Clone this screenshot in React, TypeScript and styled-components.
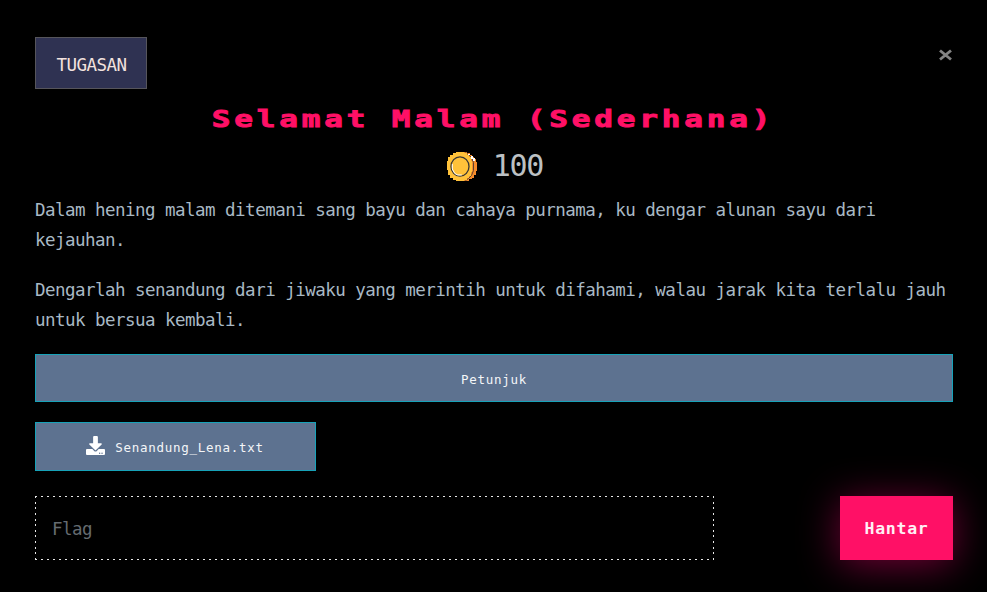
import React from "react";
import styled, { createGlobalStyle } from "styled-components";

const mono = `"DejaVu Sans Mono", "Liberation Mono", monospace`;

const Global = createGlobalStyle`
  *, *::before, *::after { box-sizing: border-box; }
  html, body { margin: 0; background: #000; }
  body {
    overflow: hidden;
    font-family: ${mono};
    color: #a9b9c5;
  }
`;

const Modal = styled.main`
  width: 987px;
  height: 592px;
  padding: 37px 34px 0 35px;
  background: #000;
  overflow: hidden;
`;

const Header = styled.header`
  display: flex;
  justify-content: space-between;
  align-items: flex-start;
`;

const Tab = styled.button`
  width: 112px;
  height: 52px;
  padding: 3px 0 0 1px;
  border: 1px solid #56555b;
  background: #2f3252;
  color: #f3e2df;
  font: 17.5px/22px ${mono};
  letter-spacing: -0.53px;
`;

const Close = styled.button`
  display: flex;
  margin-top: 12px;
  padding: 0;
  border: 0;
  background: none;
  color: #838383;
`;

const Title = styled.h3`
  margin: 14px 2px 0 0;
  height: 32px;
  display: flex;
  justify-content: center;
  color: #ff1066;
  font: bold 23px/32px ${mono};
  letter-spacing: 2.82px;
  white-space: nowrap;
  transform: scaleX(1.35);
  -webkit-text-stroke: 0.9px #ff1066;
`;

const Score = styled.div`
  display: flex;
  align-items: center;
  justify-content: center;
  gap: 15px;
  height: 40px;
  margin-top: 11px;
  padding-left: 2px;
  color: #bcc0c3;
  font: 30px/40px ${mono};
  letter-spacing: -1.3px;
`;

const Description = styled.div`
  margin-top: 8px;
  font-size: 17.5px;
  line-height: 30px;
  letter-spacing: -0.53px;
`;

const Paragraph = styled.p`
  margin: 0;
  padding: 1px 0 19px;
`;

const InfoButton = styled.button<{ $width: string; $height: number }>`
  display: flex;
  align-items: center;
  justify-content: center;
  gap: 10px;
  width: ${(p) => p.$width};
  height: ${(p) => p.$height}px;
  padding: 3px 0 0;
  border: 1px solid #17a2b8;
  background: #5d7290;
  color: #f4f6f8;
  font: 12.5px/20px ${mono};
  letter-spacing: 0.72px;
`;

const Files = styled.div`
  margin-top: 20px;
`;

const Form = styled.form`
  display: flex;
  justify-content: space-between;
  margin-top: 25px;
`;

const FlagInput = styled.input`
  width: 679px;
  height: 64px;
  padding: 2px 17px 0;
  border: 0;
  border-radius: 0;
  outline: none;
  background:
    repeating-linear-gradient(90deg, #e8e8e8 0 2px, transparent 2px 6px) top / 100% 1px no-repeat,
    repeating-linear-gradient(90deg, #e8e8e8 0 2px, transparent 2px 6px) bottom / 100% 1px no-repeat,
    repeating-linear-gradient(180deg, #e8e8e8 0 2px, transparent 2px 5.64px) left / 1px 100% no-repeat,
    repeating-linear-gradient(180deg, #e8e8e8 0 2px, transparent 2px 5.64px) right / 1px 100% no-repeat,
    #000;
  color: #fff;
  font: 17.5px/30px ${mono};
  letter-spacing: -0.53px;
  &::placeholder { color: #656b70; opacity: 1; }
`;

const Submit = styled.button`
  width: 113px;
  height: 64px;
  padding: 2px 0 0;
  border: 0;
  background: #ff1066;
  color: #fff0f5;
  font: bold 16.5px/24px ${mono};
  letter-spacing: 0.7px;
  box-shadow: 0 5px 40px rgba(255, 0, 120, 0.45);
`;

const Coin = () => (
  <svg width="31" height="29" viewBox="0 0 31 29">
    <path d="M10 0h10v1h3v2h2v2h2v2h2v3h1v9h-1v4h-2v3h-2v1h-3v2H10z" fill="#f58b2c" />
    <path d="M18.500 0.500l3 2 3 3 2 5v8l-2 5-3 3-3 2" fill="none" stroke="#5a4330" />
    <path d="M9 0h8v1h3v2h2v2h2v4h1v11h-1v4h-2v2h-2v2h-3v1H9v-1H6v-2H3v-3H1v-5H0V9h1V5h2V3h3V1h3z" fill="#ffc23a" />
    <path d="M24 4h2v2h2v3h-2V7h-2zM21 2h2v1h-2z" fill="#fff" />
    <ellipse cx="13" cy="14.500" rx="9" ry="9.700" fill="#ffc23a" stroke="#383634" strokeWidth="1.300" />
    <path d="M5.300 12v5l2.500 4.500 3 1.500h4" fill="none" stroke="#fff" />
  </svg>
);

const DownloadIcon = styled.svg`
  flex: none;
  margin: 0 0 6px -1px;
`;

const Download = () => (
  <DownloadIcon width="19" height="19" viewBox="0 0 512 512" fill="#fff">
    <path d="M216 0h80c13.300 0 24 10.700 24 24v168h87.700c17.800 0 26.700 21.500 14.100 34.100L269.700 378.300c-7.500 7.500-19.800 7.500-27.300 0L90.100 226.100c-12.600-12.600-3.700-34.100 14.100-34.100H192V24c0-13.300 10.700-24 24-24zm296 376v112c0 13.300-10.700 24-24 24H24c-13.300 0-24-10.700-24-24V376c0-13.300 10.700-24 24-24h146.700l49 49c20.100 20.100 52.500 20.100 72.600 0l49-49H488c13.300 0 24 10.700 24 24zm-124 88c0-11-9-20-20-20s-20 9-20 20 9 20 20 20 20-9 20-20zm64 0c0-11-9-20-20-20s-20 9-20 20 9 20 20 20 20-9 20-20z" />
  </DownloadIcon>
);

export default function App() {
  return (
    <>
      <Global />
      <Modal>
        <Header>
          <Tab>TUGASAN</Tab>
          <Close aria-label="Tutup">
            <svg width="15" height="12" viewBox="0 0 15 12">
              <path d="M2 1.500L13 10.500M13 1.500L2 10.500" stroke="currentColor" strokeWidth="2.900" />
            </svg>
          </Close>
        </Header>
        <Title>Selamat Malam (Sederhana)</Title>
        <Score><Coin />100</Score>
        <Description>
          <Paragraph>Dalam hening malam ditemani sang bayu dan cahaya purnama, ku dengar alunan sayu dari kejauhan.</Paragraph>
          <Paragraph>Dengarlah senandung dari jiwaku yang merintih untuk difahami, walau jarak kita terlalu jauh untuk bersua kembali.</Paragraph>
        </Description>
        <InfoButton $width="100%" $height={48}>Petunjuk</InfoButton>
        <Files>
          <InfoButton $width="281px" $height={49}><Download />Senandung_Lena.txt</InfoButton>
        </Files>
        <Form onSubmit={(e) => e.preventDefault()}>
          <FlagInput placeholder="Flag" />
          <Submit>Hantar</Submit>
        </Form>
      </Modal>
    </>
  );
}
